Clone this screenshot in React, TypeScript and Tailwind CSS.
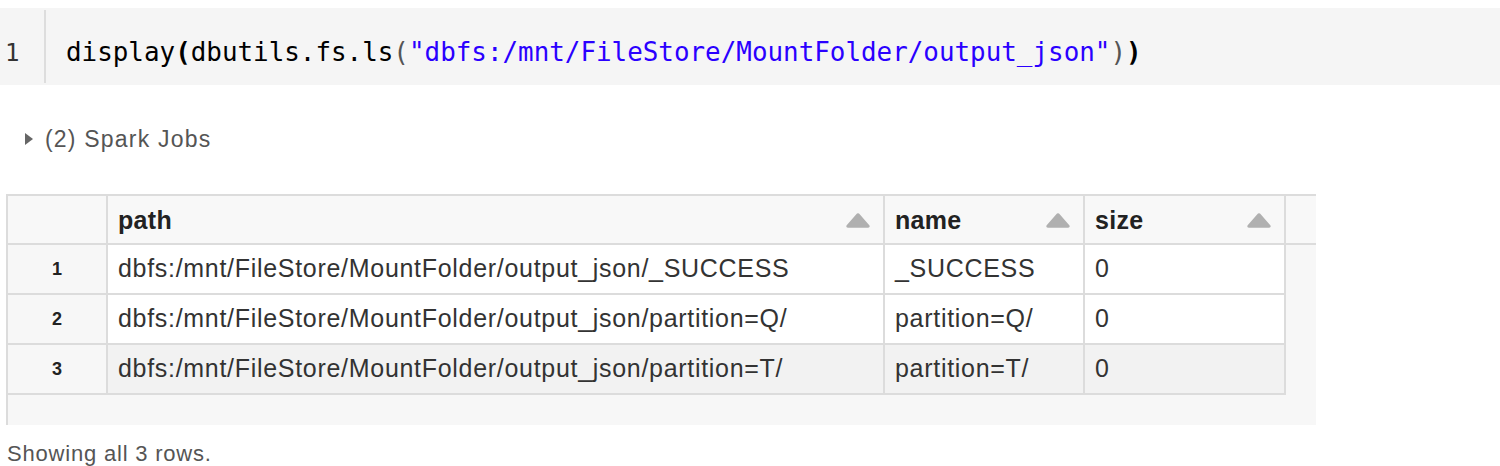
import React from 'react';

type Row = { path: string; name: string; size: string };

const rows: Row[] = [
  { path: 'dbfs:/mnt/FileStore/MountFolder/output_json/_SUCCESS', name: '_SUCCESS', size: '0' },
  { path: 'dbfs:/mnt/FileStore/MountFolder/output_json/partition=Q/', name: 'partition=Q/', size: '0' },
  { path: 'dbfs:/mnt/FileStore/MountFolder/output_json/partition=T/', name: 'partition=T/', size: '0' },
];

const SortIcon: React.FC = () => (
  <svg width="26" height="15" viewBox="0 0 26 15" className="shrink-0 mt-[2px]">
    <path d="M11.3 1.2a2 2 0 0 1 3.4 0l9.6 11.1c.9 1 .2 2.4-1.2 2.4H2.9c-1.4 0-2.1-1.4-1.2-2.4z" fill="#b0b0b0" />
  </svg>
);

const HeaderCell: React.FC<{ label: string; width: string }> = ({ label, width }) => (
  <div className={`${width} h-full flex items-center justify-between pl-[10px] pr-[12px] border-r-2 border-[#dcdcdc]`}>
    <span className="font-bold text-[25px] tracking-[0.3px] text-[#222] pt-[2px]">{label}</span>
    <SortIcon />
  </div>
);

const App: React.FC = () => {
  return (
    <div className="w-[1500px] h-[466px] bg-white overflow-hidden" style={{ fontFamily: '"Liberation Sans", Arial, sans-serif' }}>
      {/* code cell */}
      <div className="mt-[8px] h-[77px] bg-[#f5f5f5] flex items-stretch">
        <div className="w-[46px] my-[2px] border-r-2 border-[#dddddd] flex items-center pl-[5px] pt-[12px]">
          <span className="font-['DejaVu_Sans_Mono',monospace] text-[24px] text-[#333]">1</span>
        </div>
        <div className="pl-[20px] pt-[12px] flex items-center font-['DejaVu_Sans_Mono',monospace] text-[25.9px] text-black whitespace-pre">
          <span>display</span>
          <span className="font-bold">(</span>
          <span>dbutils.fs.ls</span>
          <span className="text-[#555]">(</span>
          <span className="text-[#2a00ff]">"dbfs:/mnt/FileStore/MountFolder/output_json"</span>
          <span className="text-[#555]">)</span>
          <span className="font-bold">)</span>
        </div>
      </div>

      {/* spark jobs */}
      <div className="mt-[40px] h-[28px] flex items-center pl-[25px] gap-[12px]">
        <svg width="8" height="12" viewBox="0 0 8 12">
          <path d="M0 0 L8 6 L0 12 Z" fill="#666" />
        </svg>
        <span className="text-[23px] text-[#555] tracking-[1.2px]">(2) Spark Jobs</span>
      </div>

      {/* result table */}
      <div className="mt-[41px] ml-[6px] w-[1310px] bg-[#f7f7f7] border-l-2 border-t-2 border-[#dcdcdc] pb-[30px]">
        <div className="flex h-[49px] border-b-2 border-[#dcdcdc] bg-[#f8f8f8]">
          <div className="w-[100px] h-full border-r-2 border-[#dcdcdc]" />
          <HeaderCell label="path" width="w-[777px]" />
          <HeaderCell label="name" width="w-[200px]" />
          <HeaderCell label="size" width="w-[201px]" />
          <div className="flex-1" />
        </div>
        {rows.map((r, i) => (
          <div key={i} className="flex w-[1278px] h-[50px] border-b-2 border-[#dcdcdc]">
            <div className="w-[100px] h-full flex items-center justify-center border-r-2 border-[#dcdcdc] bg-[#f7f7f7] font-bold text-[18px] text-[#222]">
              {i + 1}
            </div>
            {[
              { v: r.path, w: 'w-[777px]' },
              { v: r.name, w: 'w-[200px]' },
              { v: r.size, w: 'w-[201px]' },
            ].map((c, j) => (
              <div
                key={j}
                className={`${c.w} h-full flex items-center pl-[10px] border-r-2 border-[#dcdcdc] text-[25px] tracking-[0.7px] text-[#333] ${i === 2 ? 'bg-[#f2f2f2]' : 'bg-white'}`}
              >
                {c.v}
              </div>
            ))}
          </div>
        ))}
      </div>

      <div className="mt-[12px] pl-[7px] text-[22px] text-[#555] tracking-[0.8px]">Showing all 3 rows.</div>
    </div>
  );
};

export default App;
